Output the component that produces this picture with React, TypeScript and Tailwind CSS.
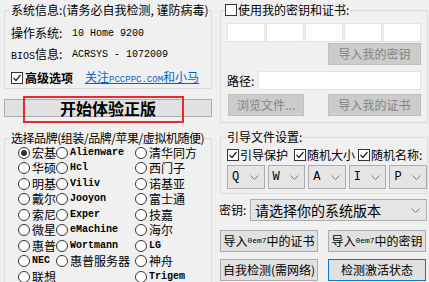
import type { ReactNode } from 'react';

const mono = "font-['Liberation_Mono',monospace] text-[10px]";

function CheckBox({ checked }: { checked?: boolean }) {
  return (
    <span className="w-[12px] h-[12px] shrink-0 border border-[#333] bg-white flex items-center justify-center">
      {checked && (
        <svg width="10" height="10" viewBox="0 0 10 10">
          <polyline points="1.5,5 4,7.5 8.5,2" fill="none" stroke="#222" strokeWidth="1.2" />
        </svg>
      )}
    </span>
  );
}

function Radio({ checked }: { checked?: boolean }) {
  return (
    <span className="w-[12px] h-[12px] shrink-0 rounded-full border border-[#333] bg-white flex items-center justify-center">
      {checked && <span className="w-[6px] h-[6px] rounded-full bg-[#333]" />}
    </span>
  );
}

function Btn({ children, disabled, focused, className = '' }: { children: ReactNode; disabled?: boolean; focused?: boolean; className?: string }) {
  const look = disabled
    ? 'bg-[#cccccc] border-[#bfbfbf] text-[#838383]'
    : focused
      ? 'bg-[#e1e1e1] border-[#0078d7] text-black'
      : 'bg-[#e1e1e1] border-[#adadad] text-black';
  return (
    <div className={`h-[22px] border flex items-center justify-center leading-none whitespace-nowrap ${look} ${className}`}>
      {children}
    </div>
  );
}

function Chevron() {
  return (
    <svg width="9" height="5" viewBox="0 0 9 5">
      <polyline points="0.5,0.5 4.5,4.5 8.5,0.5" fill="none" stroke="#777" strokeWidth="1" />
    </svg>
  );
}

function Letter({ ch }: { ch: string }) {
  return (
    <div className="h-[24px] bg-[#e5e5e5] border border-[#acacac] flex items-center justify-between pl-[4px] pr-[5px]">
      <span className="font-['Liberation_Mono',monospace] text-[12px]">{ch}</span>
      <Chevron />
    </div>
  );
}

type Brand = { label: string; latin?: boolean; checked?: boolean } | null;

const brands: Brand[][] = [
  [{ label: '宏基', checked: true }, { label: 'Alienware', latin: true }, { label: '清华同方' }],
  [{ label: '华硕' }, { label: 'Hcl', latin: true }, { label: '西门子' }],
  [{ label: '明基' }, { label: 'Viliv', latin: true }, { label: '诺基亚' }],
  [{ label: '戴尔' }, { label: 'Jooyon', latin: true }, { label: '富士通' }],
  [{ label: '索尼' }, { label: 'Exper', latin: true }, { label: '技嘉' }],
  [{ label: '微星' }, { label: 'eMachine', latin: true }, { label: '海尔' }],
  [{ label: '惠普' }, { label: 'Wortmann', latin: true }, { label: 'LG', latin: true }],
  [{ label: 'NEC', latin: true }, { label: '惠普服务器' }, { label: '神舟' }],
  [{ label: '联想' }, null, { label: 'Trigem', latin: true }],
];

export default function App() {
  return (
    <div className="w-[429px] h-[282px] overflow-hidden bg-[#f0f0f0] flex text-[12px] text-black font-['Noto_Sans_CJK_SC',sans-serif]">
      {/* left column */}
      <div className="w-[215px] shrink-0 pl-[4px] flex flex-col">
        <fieldset className="mt-[3px] w-[208px] border border-[#dcdcdc] px-0 pb-[2px]">
          <legend className="ml-[6px] px-0 leading-[14px] whitespace-nowrap">系统信息:(请务必自我检测, 谨防病毒)</legend>
          <div className="pl-[6px] flex flex-col">
            <div className="mt-[8px] h-[16px] flex items-center">
              <span className="w-[61px]">操作系统:</span>
              <span className={mono}>10 Home 9200</span>
            </div>
            <div className="mt-[5px] h-[16px] flex items-center">
              <span className="w-[61px]">
                <span className={mono}>BIOS</span>信息:
              </span>
              <span className={mono}>ACRSYS - 1072009</span>
            </div>
            <div className="mt-[8px] h-[16px] flex items-center whitespace-nowrap">
              <CheckBox checked />
              <span className="ml-[2px] font-bold">高级选项</span>
              <span className="ml-[12px] text-[#0066cc] underline">
                关注<span className="font-['Liberation_Mono',monospace] text-[9px]">PCCPPC.COM</span>和小马
              </span>
            </div>
          </div>
        </fieldset>

        <div className="relative mt-[10px] w-[208px] h-[24px] bg-[#e1e1e1] border border-[#adadad] flex items-center justify-center">
          <span className="text-[16px] font-bold leading-none">开始体验正版</span>
          <div className="absolute left-[18px] top-[-4px] w-[161px] h-[27px] border-2 border-[#e52b2b]" />
        </div>

        <fieldset className="mt-[15px] w-[208px] border border-[#dcdcdc] px-0 h-[200px]">
          <legend className="ml-[6px] px-0 leading-[12px] whitespace-nowrap tracking-[-0.45px]">选择品牌(组装/品牌/苹果/虚拟机随便)</legend>
          <div className="mt-[1px] pl-[13px] grid grid-cols-[38px_79px_1fr] auto-rows-[15.5px]">
            {brands.flatMap((row, r) =>
              row.map((b, c) =>
                b ? (
                  <div key={`${r}-${c}`} className="flex items-center whitespace-nowrap">
                    <Radio checked={b.checked} />
                    <span className={`ml-[2px] leading-none ${b.latin ? `${mono} font-bold` : ''}`}>{b.label}</span>
                  </div>
                ) : (
                  <div key={`${r}-${c}`} />
                ),
              ),
            )}
          </div>
        </fieldset>
      </div>

      {/* right column */}
      <div className="flex-1 flex flex-col">
        <fieldset className="ml-[5px] mt-[3px] w-[208px] border border-[#dcdcdc] px-0 pb-[6px]">
          <legend className="ml-[4px] px-0 leading-[14px] flex items-center whitespace-nowrap">
            <CheckBox />
            <span className="ml-[1px]">使用我的密钥和证书:</span>
          </legend>
          <div className="px-[6px] flex flex-col">
            <div className="mt-[6px] flex gap-[1px]">
              {[0, 1, 2, 3, 4].map((i) => (
                <div key={i} className="w-[38px] h-[19px] bg-white border border-[#e3e3e3]" />
              ))}
            </div>
            <div className="mt-px flex justify-end">
              <Btn disabled className="w-[93px]">导入我的密钥</Btn>
            </div>
            <div className="mt-[6px] flex items-center justify-between">
              <span>路径:</span>
              <div className="w-[163px] h-[19px] bg-white border border-[#e3e3e3]" />
            </div>
            <div className="mt-[4px] flex justify-between">
              <Btn disabled className="w-[76px] ml-px">浏览文件...</Btn>
              <Btn disabled className="w-[93px]">导入我的证书</Btn>
            </div>
          </div>
        </fieldset>

        <fieldset className="ml-[5px] mt-[8px] w-[208px] border border-[#dcdcdc] px-0 pb-[4px]">
          <legend className="ml-[6px] px-0 leading-[12px] whitespace-nowrap">引导文件设置:</legend>
          <div className="pl-[6px] flex flex-col">
            <div className="mt-[5px] h-[14px] flex items-center whitespace-nowrap">
              <div className="w-[67px] flex items-center">
                <CheckBox checked />
                <span className="ml-[1px]">引导保护</span>
              </div>
              <div className="w-[64px] flex items-center">
                <CheckBox checked />
                <span className="ml-[1px]">随机大小</span>
              </div>
              <div className="flex items-center">
                <CheckBox checked />
                <span className="ml-[1px]">随机名称:</span>
              </div>
            </div>
            <div className="mt-[3px] w-[200px] grid grid-cols-5 gap-[3px]">
              {['Q', 'W', 'A', 'I', 'P'].map((l) => (
                <Letter key={l} ch={l} />
              ))}
            </div>
          </div>
        </fieldset>

        <div className="mt-[5px] pl-[4px] flex items-center">
          <span className="w-[31px]">密钥:</span>
          <div className="w-[177px] h-[22px] bg-[#e5e5e5] border border-[#acacac] flex items-center justify-between pl-[4px] pr-[6px]">
            <span className="text-[14px] leading-none">请选择你的系统版本</span>
            <Chevron />
          </div>
        </div>

        <div className="mt-[9px] pl-[5px] flex gap-[10px]">
          <Btn className="w-[98px]">
            导入<span className="font-['Liberation_Mono',monospace] text-[8px]">0em7</span>中的证书
          </Btn>
          <Btn className="w-[98px]">
            导入<span className="font-['Liberation_Mono',monospace] text-[8px]">0em7</span>中的密钥
          </Btn>
        </div>
        <div className="mt-[7px] pl-[5px] flex gap-[10px]">
          <Btn className="w-[98px]">自我检测(需网络)</Btn>
          <Btn focused className="w-[98px]">检测激活状态</Btn>
        </div>
      </div>
    </div>
  );
}
